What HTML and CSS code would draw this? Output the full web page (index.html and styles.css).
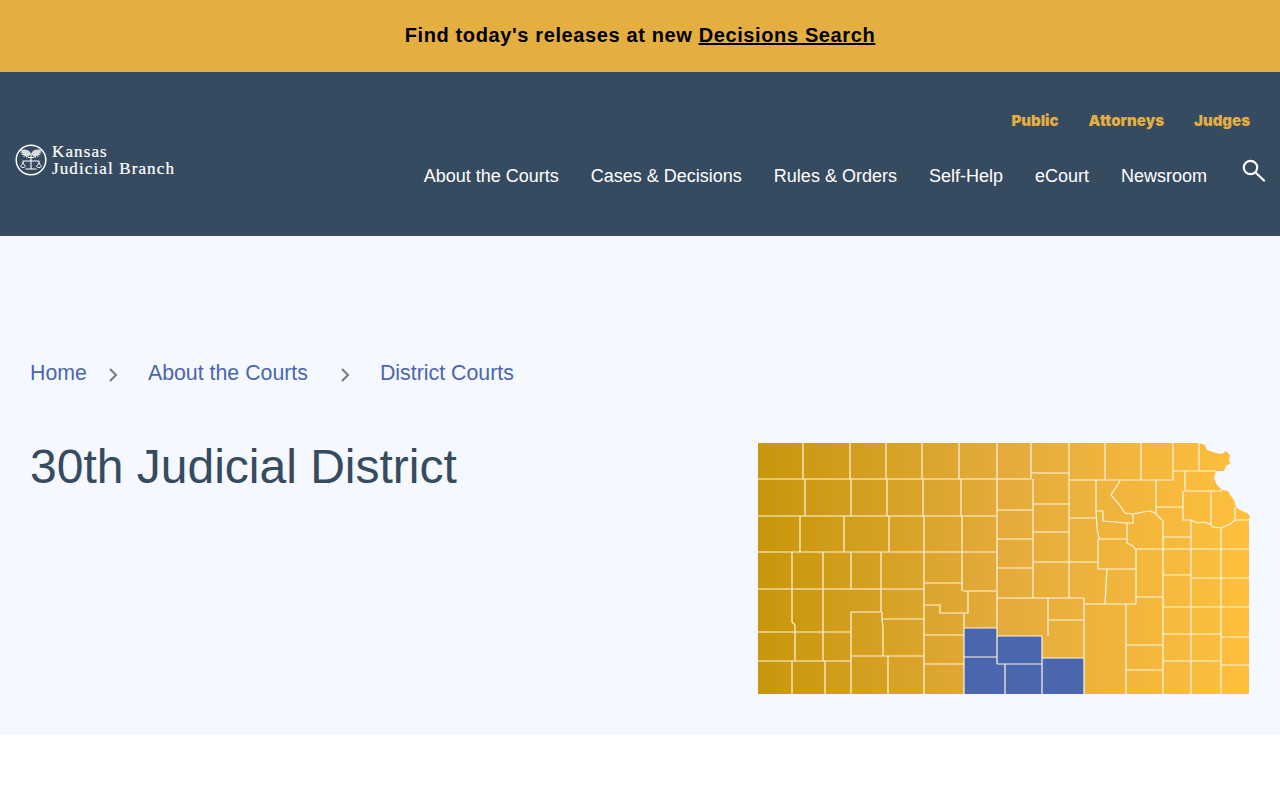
FILE: index.html
```html
<!DOCTYPE html>
<html lang="en">
<head>
  <meta charset="UTF-8">
  <title>30th Judicial District</title>
  <link rel="stylesheet" href="styles.css">
</head>
<body>

  <div class="alert-bar">
    <p>Find today's releases at new <a href="#">Decisions Search</a></p>
  </div>

  <header class="site-header">
    <a class="logo" href="#">
      <svg class="logo-seal" width="32" height="32" viewBox="0 0 32 32" fill="none" stroke="#fff">
        <circle cx="16" cy="16" r="14.8" stroke-width="1.5"/>
        <path d="M15 8C12 5 8 5 5 7l2 1-2 1 3 .5-2 1.5 3 0-1 2 3-1 0 2 3-2 2-2zM17 8c3-3 7-3 10-1l-2 1 2 1-3 .5 2 1.5-3 0 1 2-3-1 0 2-3-2-2-2z" fill="#fff" stroke="none" opacity=".8"/>
        <path d="M16 10v15M13 13.500h6M8 17h16M8 17v3M24 17v3M10.500 25h11" stroke-width="1.100"/>
        <path d="M5.500 22.500 8 19l2.500 3.500c-1 1.500-4 1.500-5 0zM21.500 22.500 24 19l2.500 3.500c-1 1.500-4 1.500-5 0z" stroke-width=".9"/>
      </svg>
      <span class="logo-text">Kansas<br>Judicial Branch</span>
    </a>

    <div class="header-right">
      <nav class="audience-nav">
        <a href="#">Public</a>
        <a href="#">Attorneys</a>
        <a href="#">Judges</a>
      </nav>
      <div class="main-row">
        <nav class="main-nav">
          <a href="#">About the Courts</a>
          <a href="#">Cases &amp; Decisions</a>
          <a href="#">Rules &amp; Orders</a>
          <a href="#">Self-Help</a>
          <a href="#">eCourt</a>
          <a href="#">Newsroom</a>
        </nav>
        <svg class="search-icon" width="24" height="24" viewBox="0 0 24 24" fill="none" stroke="#fff" stroke-width="2.200">
          <circle cx="9.500" cy="8.500" r="6.700"/>
          <path d="M14.500 13.500l8.500 8" stroke-linecap="round"/>
        </svg>
      </div>
    </div>
  </header>

  <main class="hero">
    <div class="breadcrumb">
      <a href="#">Home</a>
      <svg class="crumb-sep" width="10" height="14" viewBox="0 0 10 14" fill="none" stroke="#6f7a8a" stroke-width="2"><path d="M2 1l6 6-6 6"/></svg>
      <a href="#">About the Courts</a>
      <svg class="crumb-sep" width="10" height="14" viewBox="0 0 10 14" fill="none" stroke="#6f7a8a" stroke-width="2"><path d="M2 1l6 6-6 6"/></svg>
      <a href="#">District Courts</a>
    </div>

    <div class="hero-row">
      <h1>30th Judicial District</h1>

      <svg class="ks-map" width="493" height="252" viewBox="758 443 493 252">
        <defs>
          <linearGradient id="goldFade" gradientUnits="userSpaceOnUse" x1="758" y1="0" x2="1249" y2="0">
            <stop offset="0" stop-color="#c8960a"/>
            <stop offset=".5" stop-color="#e4ab3c"/>
            <stop offset="1" stop-color="#ffc03d"/>
          </linearGradient>
        </defs>

        <!-- state outline -->
        <path fill="url(#goldFade)" d="M758 443H1199L1205 445 1207 450 1213 452 1216 453 1222 454 1226 451 1230 455 1229 461 1231 463 1226 466 1224 471 1216 471 1214 478 1217 485 1222 490 1228 491 1230 495 1234 500 1236 507 1240 510 1247 513 1250 516 1249 519V694H758Z"/>

        <!-- 30th district -->
        <path fill="#4a66ae" d="M964 628H997V636H1042V658H1084V694H964Z"/>

        <!-- county lines -->
        <g fill="none" stroke="#fff6e2" stroke-width="1.200">
          <path d="M803 443V479M850 443V479M886 443V479M922 443V479M959 443V479M997 443V598M1031 443V479M1069 443V598M1105 443V480M1141 443V480M1173 443V480M1199 443V471"/>
          <path d="M758 479H1031M1031 473H1069M1069 480H1173M1173 471H1216"/>
          <path d="M805 479V516M851 479V516M887 479V516M923 479V516M961 479V516M1033 479V598"/>
          <path d="M758 516H997M800 516V552M844 516V552M889 516V552M924 516V694M962 516V591"/>
          <path d="M758 552H997M792 552V622L795 625V661M823 552V661M851 552V589M881 552V589"/>
          <path d="M997 510H1033M997 539H1033M997 568H1033M1033 504H1069M1033 532H1069M1033 562H1098M1069 518H1096"/>
          <path d="M758 589H881V612H851V694M881 589H924M924 583H963M963 591H997M968 591V613H940V605H924M964 613V694"/>
          <path d="M758 632H851M758 661H851M792 661V694M825 661V694M882 612V620L883 627V656M882 619H924M851 656H924M888 656V694M924 635H964M924 664H964"/>
          <path d="M997 598H1084M997 598V664M1084 598V694M1084 604H1136M1048 598V636M1042 636V694M1048 620H1084M1042 658H1084"/>
          <path d="M964 628H997M964 657H997M997 636H1042M997 664H1042M1005 664V694"/>
          <path d="M1126 604V694M1126 645H1163M1126 670H1163M1136 597H1163M1136 549V604M1098 569H1136M1107 569L1106 585 1105 604M1098 539V569M1163 520V694"/>
          <path d="M1096 480V511L1097 528 1099 539H1127M1096 511H1103V521L1115 522 1126 523H1133V514M1127 523V543L1133 546 1135 549H1163"/>
          <path d="M1120 481L1111 495 1118 503 1123 510 1125 513 1133 514 1143 512 1150 511 1155 513 1162 520M1156 480V513M1156 507H1183M1163 537H1191"/>
          <path d="M1185 471V491H1222M1183 491V520H1191L1197 523 1204 522 1210 524 1213 527 1221 528 1230 524 1235 520H1249M1211 491V525M1235 507V520M1191 520V694M1221 528V694"/>
          <path d="M1163 549H1249M1163 575H1191M1191 578H1249M1163 607H1249M1163 634H1221M1221 637H1249M1163 661H1221M1221 665H1249"/>
        </g>
      </svg>
    </div>
  </main>

</body>
</html>
```

FILE: styles.css
```css
* {
  box-sizing: border-box;
}

body {
  margin: 0;
  background-color: #ffffff;
  font-family: "Liberation Sans", Arial, sans-serif;
}

a {
  text-decoration: none;
}

.alert-bar {
  height: 72px;
  background-color: #e5ae40;
  display: flex;
  align-items: center;
  justify-content: center;
  padding-bottom: 2px;
}

.alert-bar p {
  margin: 0;
  font-size: 20px;
  font-weight: bold;
  letter-spacing: 0.62px;
  color: #000;
}

.alert-bar a {
  color: #000;
  text-decoration: underline;
}

.site-header {
  height: 164px;
  background-color: #364b60;
  display: flex;
  align-items: flex-start;
  justify-content: space-between;
  padding: 0 15px;
}

.logo {
  display: flex;
  align-items: center;
  gap: 5px;
  margin-top: 71px;
}

.logo-seal {
  display: block;
}

.logo-text {
  font-family: "Liberation Serif", serif;
  font-size: 17px;
  line-height: 17px;
  letter-spacing: 1.12px;
  color: #fff;
  -webkit-text-stroke: 0.2px #fff;
}

.header-right {
  display: flex;
  flex-direction: column;
  align-items: flex-end;
  padding-top: 40px;
}

.audience-nav {
  display: flex;
  gap: 30px;
  padding-right: 15px;
}

.audience-nav a {
  font-family: Inter, "Liberation Sans", sans-serif;
  font-size: 15px;
  font-weight: 900;
  line-height: 18px;
  color: #e5ae40;
}

.main-row {
  display: flex;
  align-items: flex-start;
  gap: 34px;
  margin-top: 34px;
}

.main-nav {
  display: flex;
  gap: 32px;
}

.main-nav a {
  font-size: 18px;
  line-height: 24px;
  color: #fff;
}

.search-icon {
  display: block;
  margin-top: -5px;
}

.hero {
  height: 499px;
  background-color: #f5f8fe;
  padding: 124px 31px 0 30px;
}

.breadcrumb {
  display: flex;
  align-items: center;
  height: 26px;
}

.breadcrumb a {
  font-size: 21.33px;
  color: #4a66ad;
}

.crumb-sep {
  margin: 4px 30px 0 21px;
}

.crumb-sep:nth-of-type(2) {
  margin-left: 32px;
  margin-right: 30px;
}

.hero-row {
  display: flex;
  align-items: flex-start;
  justify-content: space-between;
  margin-top: 57px;
}

h1 {
  margin: 0;
  font-size: 48px;
  font-weight: normal;
  line-height: 48px;
  color: #364b60;
}

.ks-map {
  display: block;
  margin-right: -2px;
}
```
